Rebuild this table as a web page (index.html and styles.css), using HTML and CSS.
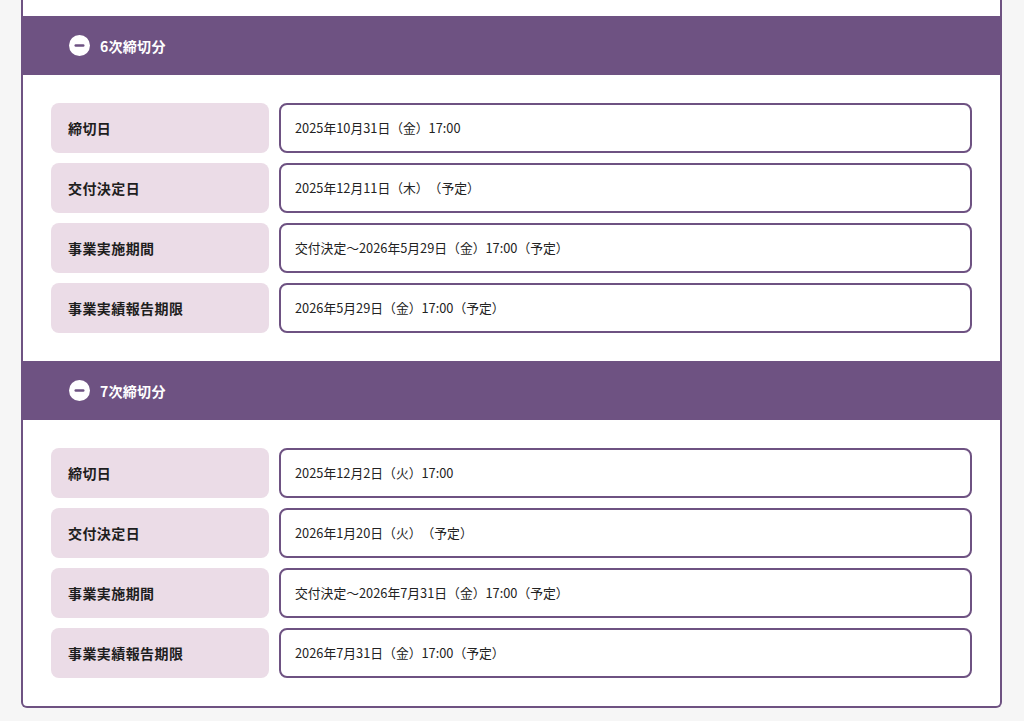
FILE: index.html
```html
<!DOCTYPE html>
<html lang="ja">
<head>
<meta charset="utf-8">
<link rel="stylesheet" href="styles.css">
</head>
<body>
<div class="card">
  <div class="tail"></div>

  <section class="sec">
    <div class="sec-head">
      <span class="minus"><svg width="21" height="21" viewBox="0 0 21 21"><circle cx="10.5" cy="10.5" r="10.5" fill="#fff"/><rect x="5.5" y="9.2" width="10" height="2.6" rx="1.2" fill="#6e5282"/></svg></span>
      <span class="sec-title">6次締切分</span>
    </div>
    <div class="sec-body">
      <div class="row"><div class="lbl">締切日</div><div class="val">2025年10月31日（金）17:00</div></div>
      <div class="row"><div class="lbl">交付決定日</div><div class="val">2025年12月11日（木）（予定）</div></div>
      <div class="row"><div class="lbl">事業実施期間</div><div class="val">交付決定～2026年5月29日（金）17:00（予定）</div></div>
      <div class="row"><div class="lbl">事業実績報告期限</div><div class="val">2026年5月29日（金）17:00（予定）</div></div>
    </div>
  </section>

  <section class="sec">
    <div class="sec-head">
      <span class="minus"><svg width="21" height="21" viewBox="0 0 21 21"><circle cx="10.5" cy="10.5" r="10.5" fill="#fff"/><rect x="5.5" y="9.2" width="10" height="2.6" rx="1.2" fill="#6e5282"/></svg></span>
      <span class="sec-title">7次締切分</span>
    </div>
    <div class="sec-body">
      <div class="row"><div class="lbl">締切日</div><div class="val">2025年12月2日（火）17:00</div></div>
      <div class="row"><div class="lbl">交付決定日</div><div class="val">2026年1月20日（火）（予定）</div></div>
      <div class="row"><div class="lbl">事業実施期間</div><div class="val">交付決定～2026年7月31日（金）17:00（予定）</div></div>
      <div class="row"><div class="lbl">事業実績報告期限</div><div class="val">2026年7月31日（金）17:00（予定）</div></div>
    </div>
  </section>
</div>
</body>
</html>
```

FILE: styles.css
```css
html, body {
  margin: 0;
  padding: 0;
  background: #f6f6f6;
}
body {
  font-family: "Noto Sans CJK JP", "Noto Sans", sans-serif;
  color: #222;
  text-spacing-trim: space-all;
}
.card {
  width: 977px;
  margin-left: 21px;
  background: #fff;
  border: 2px solid #6e5282;
  border-top: 0;
  border-radius: 0 0 6px 6px;
}
.tail {
  height: 16px;
}
.sec-head {
  height: 59px;
  background: #6e5282;
  display: flex;
  align-items: center;
  padding-left: 46px;
  gap: 10px;
}
.minus {
  display: flex;
  width: 21px;
  height: 21px;
}
.sec-title {
  color: #fff;
  font-weight: 700;
  font-size: 14px;
  letter-spacing: 0.02em;
}
.sec-body {
  padding: 28px;
  display: flex;
  flex-direction: column;
  gap: 10px;
}
.row {
  display: flex;
  gap: 10px;
  height: 50px;
}
.lbl {
  width: 218px;
  flex: none;
  background: #ebdce7;
  border-radius: 8px;
  display: flex;
  align-items: center;
  padding-left: 17px;
  box-sizing: border-box;
  font-weight: 700;
  font-size: 14px;
  letter-spacing: 0.03em;
  color: #1e1e1e;
}
.val {
  flex: 1;
  border: 2px solid #6e5282;
  border-radius: 8px;
  display: flex;
  align-items: center;
  padding: 0 0 1px 14px;
  box-sizing: border-box;
  font-size: 12.8px;
  color: #222;
}
```
